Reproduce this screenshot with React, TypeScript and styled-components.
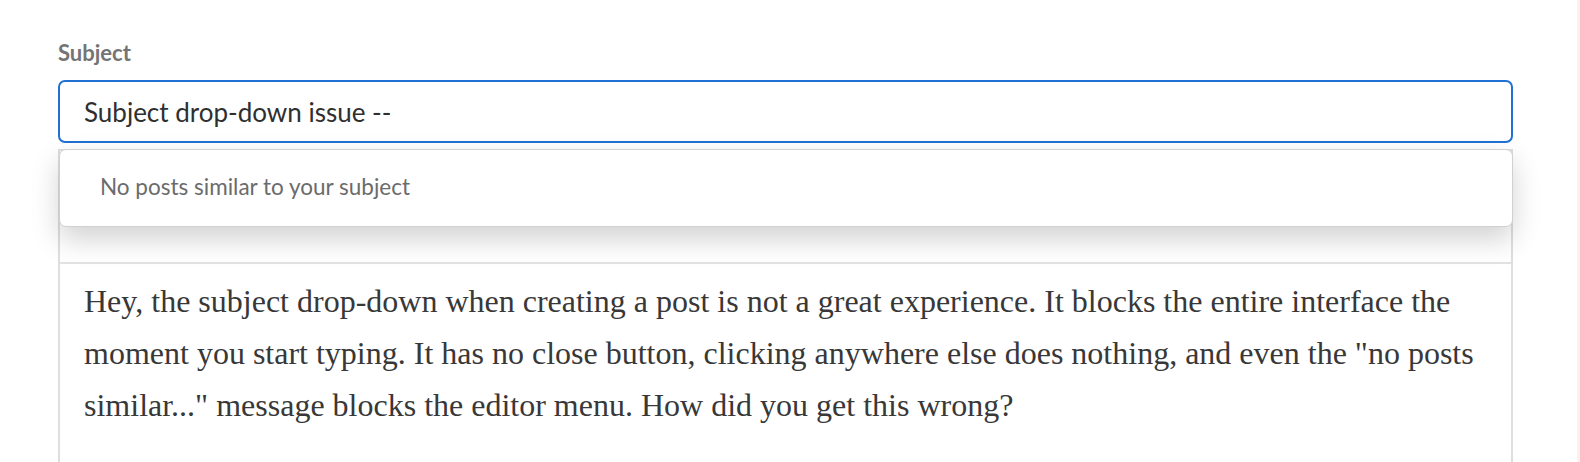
import styled, { createGlobalStyle } from "styled-components"

const Global = createGlobalStyle`
  html, body { margin: 0; padding: 0; background: #fff; }
  body { width: 1580px; height: 462px; overflow: hidden; }
`

const Page = styled.div`
  display: flex;
  height: 462px;
  overflow: hidden;
`

const Main = styled.div`
  flex: 1;
  padding: 38px 0 0 58px;
`

const Side = styled.div`
  width: 3px;
  background: #fcf1eb;
`

const Field = styled.div`
  width: 1455px;
  display: flex;
  flex-direction: column;
`

const Label = styled.label`
  font-family: Lato, "Noto Sans", sans-serif;
  font-weight: 700;
  font-size: 22px;
  line-height: 30px;
  color: #747474;
  margin-bottom: 12px;
`

const InputWrap = styled.div`
  position: relative;
`

const Input = styled.div`
  box-sizing: border-box;
  height: 63px;
  border: 2px solid #2170d3;
  border-radius: 7px;
  padding: 0 24px;
  display: flex;
  align-items: center;
  font-family: Lato, "Noto Sans", sans-serif;
  font-size: 26px;
  color: #2f2f2f;
`

const Suggest = styled.div`
  position: absolute;
  z-index: 2;
  top: 69px;
  left: 1px;
  right: 0;
  box-sizing: border-box;
  height: 78px;
  background: #fff;
  border: 1px solid #d0d0d0;
  border-radius: 7px;
  box-shadow: 0 12px 28px rgba(0, 0, 0, 0.18);
  padding: 0 0 4px 40px;
  display: flex;
  align-items: center;
  font-family: Lato, "Noto Sans", sans-serif;
  font-size: 22.5px;
  color: #6b6b6b;
`

const Editor = styled.div`
  margin-top: 6px;
  border: 2px solid #dedede;
  border-bottom: none;
  height: 400px;
  display: flex;
  flex-direction: column;
`

const Toolbar = styled.div`
  height: 111px;
  border-bottom: 2px solid #e2e2e2;
`

const Content = styled.div`
  padding: 11px 24px 0 24px;
  font-family: "Liberation Serif", "Times New Roman", serif;
  font-size: 32px;
  line-height: 52px;
  color: #383838;
`

export default function App() {
  return (
    <Page>
      <Global />
      <Main>
        <Field>
          <Label>Subject</Label>
          <InputWrap>
            <Input>Subject drop-down issue --</Input>
            <Suggest>No posts similar to your subject</Suggest>
          </InputWrap>
          <Editor>
            <Toolbar />
            <Content>
              Hey, the subject drop-down when creating a post is not a great experience. It blocks the entire interface the
              moment you start typing. It has no close button, clicking anywhere else does nothing, and even the "no posts
              similar..." message blocks the editor menu. How did you get this wrong?
            </Content>
          </Editor>
        </Field>
      </Main>
      <Side />
    </Page>
  )
}
